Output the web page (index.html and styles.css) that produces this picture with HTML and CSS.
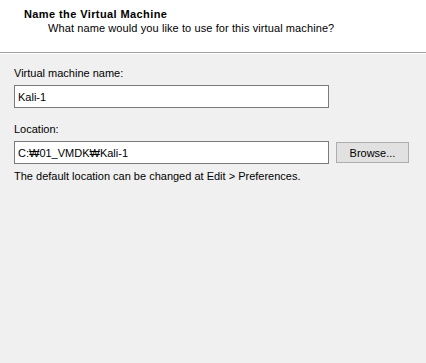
FILE: index.html
```html
<!DOCTYPE html>
<html lang="en">
<head>
    <meta charset="UTF-8">
    <title>Name the Virtual Machine</title>
    <link rel="stylesheet" href="styles.css">
</head>
<body>
    <div class="wizard-header">
        <div class="wizard-title">Name the Virtual Machine</div>
        <div class="wizard-subtitle">What name would you like to use for this virtual machine?</div>
    </div>

    <div class="wizard-body">
        <label class="field-label" for="vmName">Virtual machine name:</label>
        <div class="field-row">
            <input type="text" id="vmName" class="text-input" value="Kali-1">
        </div>

        <label class="field-label location-label" for="vmLocation">Location:</label>
        <div class="field-row">
            <input type="text" id="vmLocation" class="text-input" value="C:₩01_VMDK₩Kali-1">
            <button class="browse-button">Browse...</button>
        </div>
        <p class="hint">The default location can be changed at Edit &gt; Preferences.</p>
    </div>
</body>
</html>
```

FILE: styles.css
```css
html, body {
    height: 100%;
}
body {
    margin: 0;
    background: #f0f0f0;
    font-family: "Liberation Sans", Arial, sans-serif;
    font-size: 11px;
    color: #000;
}
.wizard-header {
    background: #fff;
    height: 53px;
    box-sizing: border-box;
    padding: 8px 0 0 24px;
    border-bottom: 1px solid #a0a0a0;
    box-shadow: 0 1px 0 #fff;
}
.wizard-title {
    font-weight: bold;
    line-height: 13px;
    letter-spacing: 0.4px;
}
.wizard-subtitle {
    padding-left: 24px;
    line-height: 15px;
    letter-spacing: 0.1px;
}
.wizard-body {
    padding: 14px 14px 0 14px;
}
.field-label {
    display: block;
    line-height: 13px;
    margin-bottom: 5px;
}
.location-label {
    margin-top: 15px;
}
.field-row {
    display: flex;
    align-items: center;
    gap: 7px;
}
.text-input {
    width: 315px;
    height: 23px;
    box-sizing: border-box;
    border: 1px solid #7a7a7a;
    background: #fff;
    padding: 0 3px;
    margin: 0;
    font: inherit;
    color: #000;
    outline: none;
}
.browse-button {
    width: 73px;
    height: 21px;
    box-sizing: border-box;
    border: 1px solid #adadad;
    background: #e1e1e1;
    font: inherit;
    color: #000;
    padding: 0;
    margin: 0;
}
.hint {
    margin: 6px 0 0 0;
    line-height: 13px;
}
```
